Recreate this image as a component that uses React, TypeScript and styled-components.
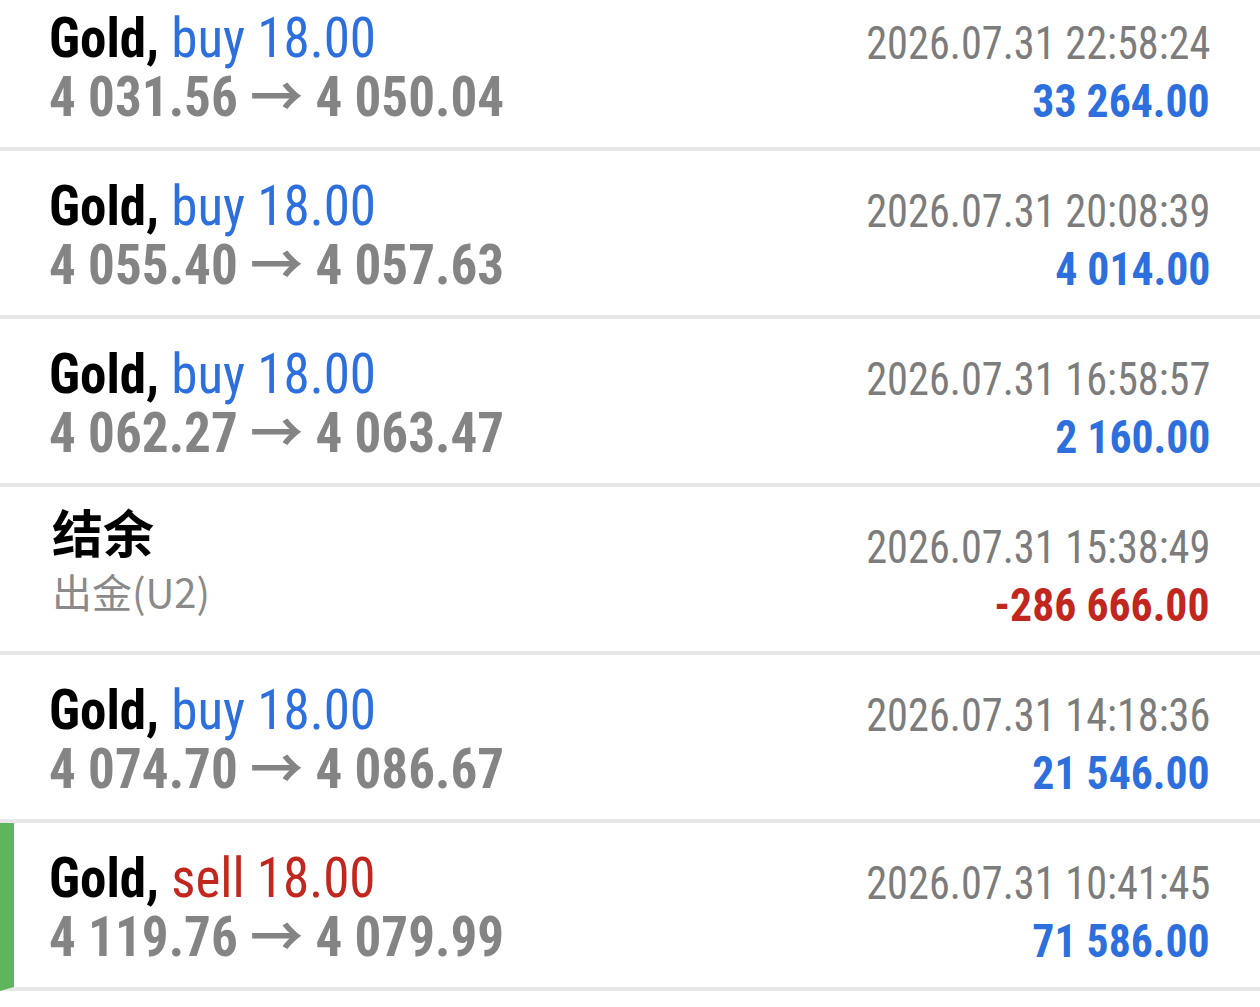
import React from "react";
import styled, { createGlobalStyle } from "styled-components";

const Global = createGlobalStyle`
  html, body { margin: 0; padding: 0; background: #ffffff; }
  body { font-family: "Roboto Condensed", Roboto, "Noto Sans CJK SC", sans-serif; overflow: hidden; }
`;

type Tone = "blue" | "red" | "gray" | "black";
const colors: Record<Tone, string> = {
  blue: "#2d6fdc",
  red: "#c1261f",
  gray: "#848484",
  black: "#000000",
};

const List = styled.div`
  display: flex;
  flex-direction: column;
  margin-top: -17px;
`;

const Row = styled.div<{ $marked?: boolean }>`
  display: flex;
  justify-content: space-between;
  height: 164px;
  padding: 0 50px 0 ${(p) => (p.$marked ? "35px" : "49px")};
  border-bottom: 4px solid #e7e7e7;
  border-left: ${(p) => (p.$marked ? "14px solid #5db65b" : "none")};
`;

const Left = styled.div`
  display: flex;
  flex-direction: column;
  padding-top: 25px;
`;

const Right = styled.div`
  display: flex;
  flex-direction: column;
  align-items: flex-end;
  padding-top: 31px;
`;

const Title = styled.div`
  font-size: 56px;
  line-height: 60px;
  white-space: nowrap;
  color: #000;
  transform: scaleX(0.947);
  transform-origin: left center;
`;

const Symbol = styled.span`
  font-weight: 700;
`;

const Side = styled.span<{ $tone: Tone }>`
  color: ${(p) => colors[p.$tone]};
`;

const Prices = styled.div`
  font-size: 55px;
  line-height: 58px;
  font-weight: 700;
  color: ${colors.gray};
  white-space: nowrap;
  transform: scaleX(0.966);
  transform-origin: left center;
`;

const CjkTitle = styled.div`
  font-family: "Noto Sans CJK SC", sans-serif;
  font-size: 51px;
  line-height: 56px;
  font-weight: 700;
  color: #000;
  padding-left: 3px;
  margin-top: -9px;
`;

const Comment = styled.div`
  font-family: "Noto Sans CJK SC", sans-serif;
  font-size: 40px;
  line-height: 50px;
  color: #8a8a8a;
  padding-left: 3px;
  margin-top: 7px;
`;

const DateText = styled.div`
  font-size: 47px;
  line-height: 58px;
  color: #7c7c7c;
  white-space: nowrap;
  transform: scaleX(0.9);
  transform-origin: right center;
`;

const Amount = styled.div<{ $tone: Tone }>`
  font-size: 46px;
  line-height: 58px;
  font-weight: 700;
  color: ${(p) => colors[p.$tone]};
  white-space: nowrap;
  transform: scaleX(0.95);
  transform-origin: right center;
`;

type Deal =
  | {
      kind: "trade";
      side: "buy" | "sell";
      volume: string;
      open: string;
      close: string;
      time: string;
      profit: string;
      marked?: boolean;
    }
  | { kind: "balance"; title: string; comment: string; time: string; profit: string };

const deals: Deal[] = [
  { kind: "trade", side: "buy", volume: "18.00", open: "4 031.56", close: "4 050.04", time: "2026.07.31 22:58:24", profit: "33 264.00" },
  { kind: "trade", side: "buy", volume: "18.00", open: "4 055.40", close: "4 057.63", time: "2026.07.31 20:08:39", profit: "4 014.00" },
  { kind: "trade", side: "buy", volume: "18.00", open: "4 062.27", close: "4 063.47", time: "2026.07.31 16:58:57", profit: "2 160.00" },
  { kind: "balance", title: "结余", comment: "出金(U2)", time: "2026.07.31 15:38:49", profit: "-286 666.00" },
  { kind: "trade", side: "buy", volume: "18.00", open: "4 074.70", close: "4 086.67", time: "2026.07.31 14:18:36", profit: "21 546.00" },
  { kind: "trade", side: "sell", volume: "18.00", open: "4 119.76", close: "4 079.99", time: "2026.07.31 10:41:45", profit: "71 586.00", marked: true },
];

export default function App() {
  return (
    <>
      <Global />
      <List>
        {deals.map((d, i) =>
          d.kind === "trade" ? (
            <Row key={i} $marked={d.marked}>
              <Left>
                <Title>
                  <Symbol>Gold,</Symbol>{" "}
                  <Side $tone={d.side === "buy" ? "blue" : "red"}>
                    {d.side} {d.volume}
                  </Side>
                </Title>
                <Prices>
                  {d.open} → {d.close}
                </Prices>
              </Left>
              <Right>
                <DateText>{d.time}</DateText>
                <Amount $tone="blue">{d.profit}</Amount>
              </Right>
            </Row>
          ) : (
            <Row key={i}>
              <Left>
                <CjkTitle>{d.title}</CjkTitle>
                <Comment>{d.comment}</Comment>
              </Left>
              <Right>
                <DateText>{d.time}</DateText>
                <Amount $tone="red">{d.profit}</Amount>
              </Right>
            </Row>
          )
        )}
      </List>
    </>
  );
}
